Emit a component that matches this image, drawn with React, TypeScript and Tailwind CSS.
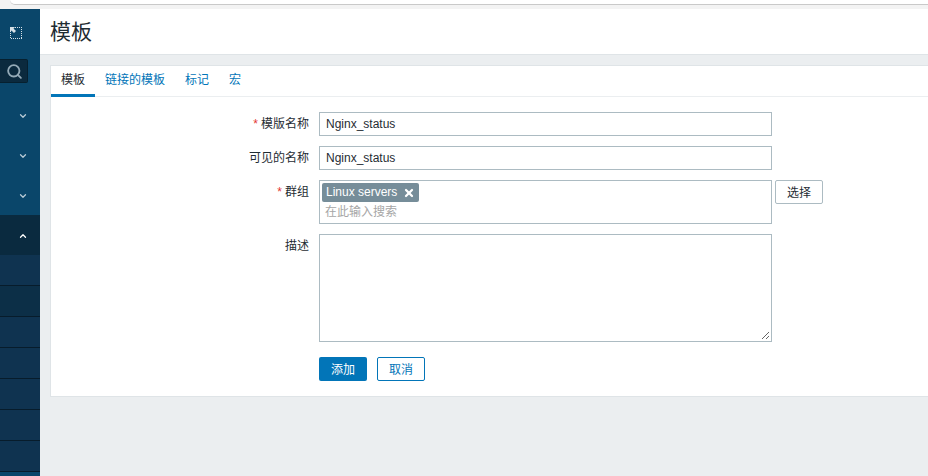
import { ChevronDown, ChevronUp, Search, X } from "lucide-react";

const font = { fontFamily: '"Liberation Sans", "Noto Sans CJK SC", sans-serif' };

function Label({ text, required }: { text: string; required?: boolean }) {
  return (
    <div className="w-[268px] shrink-0 pr-[10px] h-[24px] leading-[24px] text-right text-[12px] text-[#1f2c33]">
      {required && <span className="text-[#e33734] mr-[3px]">*</span>}
      {text}
    </div>
  );
}

function TextInput({ value }: { value: string }) {
  return (
    <div className="w-[453px] h-[24px] border border-[#acbbc2] bg-white pl-[6px] leading-[22px] text-[12px] text-[#1f2c33]">
      {value}
    </div>
  );
}

function Tab({ text, active }: { text: string; active?: boolean }) {
  return (
    <div className={active ? "h-[31px] px-[10px] leading-[29px] text-[12px] text-[#1f2c33] border-b-[3px] border-[#0275b8]" : "h-[31px] px-[10px] leading-[29px] text-[12px] text-[#0275b8]"}>
      {text}
    </div>
  );
}

function NavItem({ open }: { open?: boolean }) {
  return (
    <div className={open ? "h-[40px] flex items-center justify-center pl-[5px] pt-[1px] bg-[#0a2a3f] text-white" : "h-[40px] flex items-center justify-center pl-[5px] pt-[1px] text-[#b9cbd6]"}>
      {open ? <ChevronUp size={10} strokeWidth={3} /> : <ChevronDown size={10} strokeWidth={3} />}
    </div>
  );
}

export default function App() {
  return (
    <div className="w-[928px] h-[476px] overflow-hidden bg-[#ebeef0] flex flex-col" style={font}>
      <div className="h-[9px] shrink-0 bg-[#f3f3f3]">
        <div className="h-[5px] ml-[10px] bg-white border-b border-[#c9c9c9] rounded-bl-[8px]" />
      </div>
      <div className="flex flex-1 min-h-0">
        <aside className="w-[40px] shrink-0 bg-[#0a466a] flex flex-col">
          <div className="h-[50px] flex items-center pl-[9px] pb-[2px]">
            <svg width="14" height="14" viewBox="0 0 14 14" shapeRendering="crispEdges" className="text-[#d5e0e6]">
              <rect x="1.5" y="1.5" width="11" height="11" fill="none" stroke="currentColor" strokeDasharray="1 1" />
              <path d="M1 1h5L4.5 2.5 7 5 5 7 2.5 4.5 1 6z" fill="currentColor" shapeRendering="auto" />
            </svg>
          </div>
          <div className="w-[28px] h-[24px] flex items-center justify-end pr-[4px] bg-[#0b2a3e] border border-l-0 border-[#06202f] rounded-r-[2px] text-[#94aab7]">
            <Search size={17} strokeWidth={2.6} />
          </div>
          <div className="h-[12px] shrink-0" />
          <NavItem />
          <NavItem />
          <NavItem />
          <NavItem open />
          {[30, 30, 30, 30, 30, 30, 30].map((h, i) => (
            <div key={i} style={{ height: h }} className={i === 1 ? "shrink-0 bg-[#0c2f47] border-b border-[#071c2b] box-content" : "shrink-0 bg-[#0f3350] border-b border-[#071c2b] box-content"} />
          ))}
        </aside>
        <main className="flex-1 min-w-0">
          <header className="h-[46px] bg-white border-b border-[#dfe4e7] pl-[10px] leading-[46px] text-[21px] text-[#1f2c33]">
            模板
          </header>
          <section className="mt-[10px] ml-[10px] w-[900px] h-[332px] bg-white border border-[#dfe4e7]">
            <nav className="flex h-[31px] border-b border-[#ebeef0]">
              <Tab text="模板" active />
              <Tab text="链接的模板" />
              <Tab text="标记" />
              <Tab text="宏" />
            </nav>
            <form className="pt-[15px] flex flex-col gap-[10px]">
              <div className="flex">
                <Label text="模版名称" required />
                <TextInput value="Nginx_status" />
              </div>
              <div className="flex">
                <Label text="可见的名称" />
                <TextInput value="Nginx_status" />
              </div>
              <div className="flex">
                <Label text="群组" required />
                <div className="w-[453px] h-[44px] border border-[#acbbc2] pl-[2px] pt-[2px]">
                  <div className="w-fit h-[19px] flex items-center gap-[6px] pl-[4px] pr-[4px] pb-[1px] bg-[#768d99] rounded-[2px] text-[12px] text-white">
                    <span>Linux servers</span>
                    <X size={12} strokeWidth={4.5} className="mt-[1px]" />
                  </div>
                  <div className="pl-[3px] mt-[1px] leading-[19px] text-[12px] text-[#a6a6a6]">在此输入搜索</div>
                </div>
                <div className="ml-[3px] w-[48px] h-[24px] border border-[#acbbc2] rounded-[2px] text-center leading-[24px] text-[12px] text-[#1f2c33]">
                  选择
                </div>
              </div>
              <div className="flex">
                <Label text="描述" />
                <div className="relative w-[453px] h-[108px] border border-[#acbbc2]">
                  <svg width="9" height="9" viewBox="0 0 9 9" className="absolute right-[1px] bottom-[1px] text-[#666]">
                    <path d="M1 8 8 1M5 8 8 5" stroke="currentColor" fill="none" />
                  </svg>
                </div>
              </div>
              <div className="flex gap-[10px] pl-[268px] pt-[5px]">
                <div className="w-[48px] h-[24px] bg-[#0275b8] rounded-[2px] text-center leading-[26px] text-[12px] text-white">添加</div>
                <div className="w-[48px] h-[24px] border border-[#0275b8] rounded-[2px] text-center leading-[24px] text-[12px] text-[#0275b8]">取消</div>
              </div>
            </form>
          </section>
        </main>
      </div>
    </div>
  );
}
